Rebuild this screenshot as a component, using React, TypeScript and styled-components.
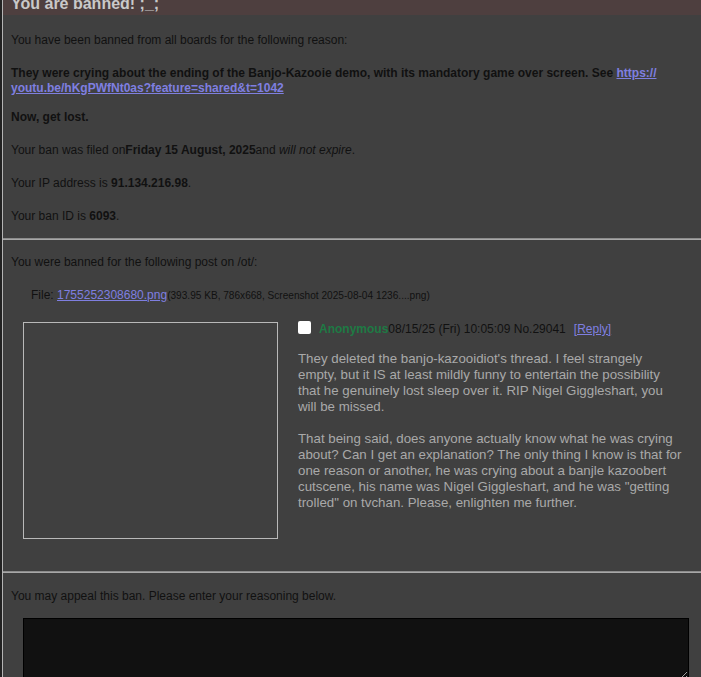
import React from "react";
import styled, { createGlobalStyle } from "styled-components";

const Global = createGlobalStyle`
  html, body { margin: 0; padding: 0; background: #222222; }
  body { font-family: Arial, "Liberation Sans", sans-serif; font-size: 12px; color: #111111; overflow: hidden; }
`;

const Panel = styled.div`
  margin: -11px 0 0 2px;
  border-left: 1px solid #b4b4b4;
  background: #404040;
  min-height: 720px;
`;

const Header = styled.h2`
  margin: 0;
  padding: 5px 8px 1px;
  background: #4e3f3f;
  color: #c9c9c9;
  font-size: 16px;
  line-height: 20px;
  font-weight: bold;
`;

const Section = styled.div<{ $pb?: number }>`
  padding: 0 8px ${(p) => p.$pb ?? 0}px;
`;

const P = styled.p<{ $mt?: number }>`
  margin: ${(p) => p.$mt ?? 18}px 0 0;
  line-height: 15px;
`;

const Rule = styled.hr`
  margin: 0;
  height: 0;
  border: none;
  border-top: 1px solid #8c8c8c;
  border-bottom: 1px solid #a8a8a8;
`;

const Link = styled.a`
  color: #7f7fe0;
  text-decoration: underline;
`;

const FileLine = styled.div`
  margin: 18px 0 0 20px;
  line-height: 15px;
`;

const FileInfo = styled.span`
  font-size: 10.1px;
`;

const PostRow = styled.div`
  display: flex;
  align-items: flex-start;
  margin: 19px 0 0 12px;
  padding-bottom: 32px;
`;

const Thumb = styled.div`
  flex: none;
  width: 253px;
  height: 215px;
  border: 1px solid #b9b9b9;
  margin-right: 20px;
`;

const PostBody = styled.div`
  flex: 1;
  padding-right: 9px;
`;

const Meta = styled.div`
  display: flex;
  align-items: flex-end;
  height: 17px;
  line-height: 17px;
  margin-top: -1px;
`;

const Check = styled.span`
  align-self: flex-start;
  flex: none;
  display: inline-block;
  width: 13px;
  height: 13px;
  background: #ffffff;
  border-radius: 2px;
  margin-right: 8px;
`;

const Name = styled.span`
  color: #1e7a44;
  font-weight: bold;
`;

const ReplyLink = styled(Link)`
  margin-left: 8px;
`;

const Message = styled.blockquote`
  margin: 13px 0 0;
  color: #a9a9a9;
  font-size: 13.3px;
  line-height: 16px;
`;

const Appeal = styled.textarea`
  display: block;
  box-sizing: border-box;
  margin: 14px 0 0 12px;
  width: 666px;
  height: 62px;
  background: #111111;
  border: 1px solid #000000;
  color: #cccccc;
  padding: 2px;
`;

export default function App() {
  return (
    <>
      <Global />
      <Panel>
        <Header>You are banned! ;_;</Header>
        <Section $pb={14}>
          <P>You have been banned from all boards for the following reason:</P>
          <P>
            <b>
              They were crying about the ending of the Banjo-Kazooie demo, with its mandatory game over screen. See{" "}
              <Link href="#">https://<br />youtu.be/hKgPWfNt0as?feature=shared&amp;t=1042</Link>
            </b>
          </P>
          <P $mt={14}>
            <b>Now, get lost.</b>
          </P>
          <P>
            Your ban was filed on<b>Friday 15 August, 2025</b>and <i>will not expire</i>.
          </P>
          <P>
            Your IP address is <b>91.134.216.98</b>.
          </P>
          <P>
            Your ban ID is <b>6093</b>.
          </P>
        </Section>
        <Rule />
        <Section>
          <P $mt={15}>You were banned for the following post on /ot/:</P>
          <FileLine>
            File: <Link href="#">1755252308680.png</Link>
            <FileInfo>(393.95 KB, 786x668, Screenshot 2025-08-04 1236....png)</FileInfo>
          </FileLine>
          <PostRow>
            <Thumb />
            <PostBody>
              <Meta>
                <Check />
                <Name>Anonymous</Name>
                <span>08/15/25 (Fri) 10:05:09 No.29041</span>
                <ReplyLink href="#">[Reply]</ReplyLink>
              </Meta>
              <Message>
                They deleted the banjo-kazooidiot's thread. I feel strangely empty, but it IS at least mildly funny to
                entertain the possibility that he genuinely lost sleep over it. RIP Nigel Giggleshart, you will be
                missed.
                <br />
                <br />
                That being said, does anyone actually know what he was crying about? Can I get an explanation? The only
                thing I know is that for one reason or another, he was crying about a banjle kazoobert cutscene, his
                name was Nigel Giggleshart, and he was "getting trolled" on tvchan. Please, enlighten me further.
              </Message>
            </PostBody>
          </PostRow>
        </Section>
        <Rule />
        <Section>
          <P $mt={16}>You may appeal this ban. Please enter your reasoning below.</P>
          <Appeal />
        </Section>
      </Panel>
    </>
  );
}
